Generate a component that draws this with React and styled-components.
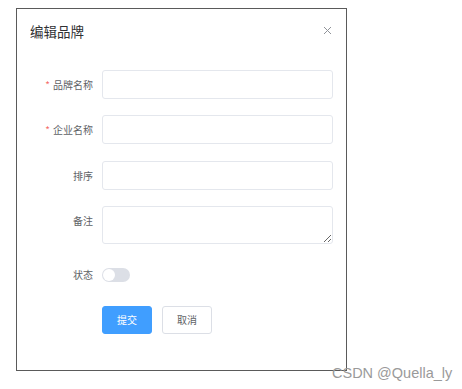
import styled, {createGlobalStyle} from "styled-components";
import {useState} from "react";

const GlobalStyle = createGlobalStyle`
  html, body {
    margin: 0;
    padding: 0;
    background: #fff;
  }
  body {
    font-family: "Noto Sans CJK SC", "Liberation Sans", sans-serif;
  }
`;

const Page = styled.div`
  position: relative;
  width: 462px;
  height: 389px;
  padding: 8px 0 0 16px;
  box-sizing: border-box;
`;

const Dialog = styled.div`
  width: 331px;
  height: 363px;
  box-sizing: border-box;
  border: 1px solid #5a5a5a;
  background: #fff;
  display: flex;
  flex-direction: column;
`;

const Header = styled.div`
  display: flex;
  justify-content: space-between;
  align-items: flex-start;
  padding: 14px 14px 7px 13px;
`;

const Title = styled.span`
  font-size: 13.5px;
  line-height: 17px;
  color: #303133;
`;

const Close = styled.button`
  border: none;
  background: none;
  padding: 0;
  margin-top: 2px;
  width: 10px;
  height: 10px;
  display: flex;
  align-items: center;
  justify-content: center;
  cursor: pointer;
`;

const Form = styled.form`
  display: flex;
  flex-direction: column;
  gap: 16.33px;
  padding: 23px 13px 0 14px;
`;

const Row = styled.div`
  display: flex;
  align-items: flex-start;
`;

const Label = styled.label`
  width: 62px;
  padding-right: 9px;
  flex-shrink: 0;
  text-align: right;
  font-size: 10px;
  line-height: 29px;
  color: #606266;
  white-space: nowrap;
  &::before {
    content: ${p => (p.$required ? '"*"' : '""')};
    color: #f56c6c;
    margin-right: 3px;
  }
`;

const Input = styled.input`
  flex: 1;
  height: 29px;
  box-sizing: border-box;
  border: 1px solid #e4e7ed;
  border-radius: 3px;
  outline: none;
  padding: 0 10px;
  font-size: 10px;
`;

const TextArea = styled.textarea`
  flex: 1;
  height: 38px;
  box-sizing: border-box;
  border: 1px solid #e4e7ed;
  border-radius: 3px;
  outline: none;
  resize: vertical;
  padding: 4px 10px;
  font-size: 10px;
  font-family: inherit;
`;

const SwitchWrap = styled.div`
  height: 29px;
  display: flex;
  align-items: center;
`;

const Switch = styled.button`
  position: relative;
  width: 28px;
  height: 14px;
  border: none;
  border-radius: 7px;
  padding: 0;
  background: ${p => (p.$on ? "#409eff" : "#dcdfe6")};
  cursor: pointer;
  &::after {
    content: "";
    position: absolute;
    top: 1px;
    left: ${p => (p.$on ? "15px" : "1px")};
    width: 12px;
    height: 12px;
    border-radius: 50%;
    background: #fff;
    transition: left .2s;
  }
`;

const Actions = styled.div`
  display: flex;
  gap: 10px;
  padding-left: 71px;
`;

const Button = styled.button`
  width: 50px;
  height: 28px;
  box-sizing: border-box;
  border-radius: 3px;
  font-size: 10px;
  font-family: inherit;
  cursor: pointer;
  ${p => p.$primary ?
      `background: #409eff; border: 1px solid #409eff; color: #fff;`
      :
      `background: #fff; border: 1px solid #dcdfe6; color: #606266;`
  }
`;

const Watermark = styled.span`
  position: absolute;
  left: 332px;
  top: 364px;
  font-family: "Liberation Sans", Arial, sans-serif;
  font-size: 14.5px;
  line-height: 18px;
  color: #9a9a9a;
  white-space: nowrap;
`;

const App = () => {
    const [status, setStatus] = useState(false);
    return (
        <>
            <GlobalStyle/>
            <Page>
                <Dialog>
                    <Header>
                        <Title>编辑品牌</Title>
                        <Close type="button" aria-label="close">
                            <svg width="9" height="9" viewBox="0 0 9 9">
                                <path d="M1 1L8 8M8 1L1 8" stroke="#909399" strokeWidth="1"/>
                            </svg>
                        </Close>
                    </Header>
                    <Form onSubmit={e => e.preventDefault()}>
                        <Row>
                            <Label $required>品牌名称</Label>
                            <Input/>
                        </Row>
                        <Row>
                            <Label $required>企业名称</Label>
                            <Input/>
                        </Row>
                        <Row>
                            <Label>排序</Label>
                            <Input/>
                        </Row>
                        <Row>
                            <Label>备注</Label>
                            <TextArea/>
                        </Row>
                        <Row>
                            <Label>状态</Label>
                            <SwitchWrap>
                                <Switch type="button" $on={status} onClick={() => setStatus(!status)}/>
                            </SwitchWrap>
                        </Row>
                        <Actions>
                            <Button $primary type="submit">提交</Button>
                            <Button type="button">取消</Button>
                        </Actions>
                    </Form>
                </Dialog>
                <Watermark>CSDN @Quella_ly</Watermark>
            </Page>
        </>
    );
}

export default App
